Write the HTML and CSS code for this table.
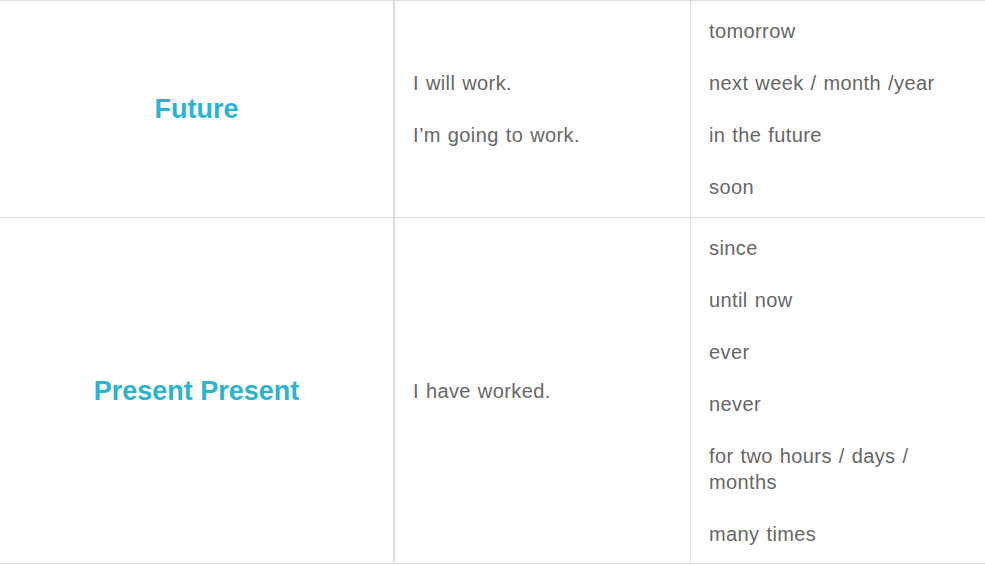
FILE: index.html
```html
<!DOCTYPE html>
<html lang="en">
<head>
<meta charset="utf-8">
<title>Tenses</title>
<link rel="stylesheet" href="styles.css">
</head>
<body>
<table class="tenses">
  <colgroup>
    <col class="col-name">
    <col class="col-example">
    <col class="col-words">
  </colgroup>
  <tbody>
    <tr class="row-first">
      <td class="tense">Future</td>
      <td class="example">
        <p>I will work.</p>
        <p>I’m going to work.</p>
      </td>
      <td class="words">
        <p>tomorrow</p>
        <p>next week / month /year</p>
        <p>in the future</p>
        <p>soon</p>
      </td>
    </tr>
    <tr class="row-last">
      <td class="tense">Present Present</td>
      <td class="example">
        <p>I have worked.</p>
      </td>
      <td class="words">
        <p>since</p>
        <p>until now</p>
        <p>ever</p>
        <p>never</p>
        <p>for two hours / days / months</p>
        <p>many times</p>
      </td>
    </tr>
  </tbody>
</table>
</body>
</html>
```
FILE: styles.css
```css
html, body {
  margin: 0;
  padding: 0;
  background: #fff;
}

body {
  font-family: "Liberation Sans", Arial, sans-serif;
  color: #666;
  overflow: hidden;
}

.tenses {
  border-collapse: separate;
  border-spacing: 0;
  table-layout: fixed;
  width: 985px;
  border-top: 1px solid #ddd;
}

.col-name { width: 393px; }
.col-example { width: 297px; }
.col-words { width: 295px; }

.tenses td {
  vertical-align: middle;
  border-bottom: 1px solid #ddd;
  padding: 17px 18px;
  font-size: 20px;
  line-height: 26px;
  letter-spacing: 0.4px;
  word-spacing: 1px;
}

.row-last td {
  padding-bottom: 16px;
}

.tenses td.example {
  border-left: 2px solid #ddd;
}

.tenses td.words {
  border-left: 1px solid #ddd;
  padding-right: 50px;
}

.tenses td.tense {
  text-align: center;
  font-weight: bold;
  font-size: 27px;
  letter-spacing: 0;
  word-spacing: 0;
  color: #2ab4d2;
}

.tenses p {
  margin: 0 0 26px 0;
}

.tenses p:last-child {
  margin-bottom: 0;
}
```
